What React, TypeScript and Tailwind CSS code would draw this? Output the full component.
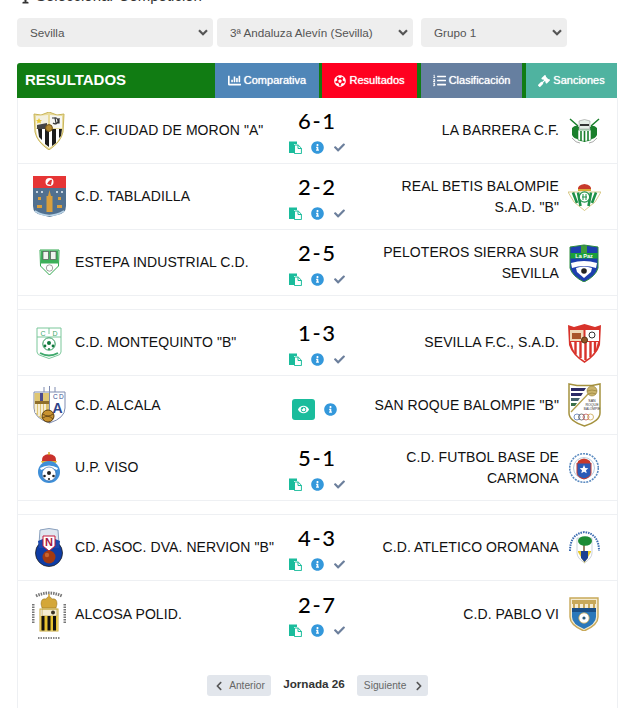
import React from "react";
import { FaChartBar, FaFutbol, FaListOl, FaGavel, FaInfoCircle, FaCheck, FaEye, FaChevronLeft, FaChevronRight, FaTrophy } from "react-icons/fa";

const Moron = () => (
  <svg width="32" height="38" viewBox="0 0 32 38">
    <path d="M1 2 L8 3 L16 0 L24 3 L31 2 L30 20 Q28 30 16 38 Q4 30 2 20Z" fill="#e9dc9c" stroke="#c9b55a" />
    <path d="M3 4 L15 3 V16 H3Z" fill="#f3f0e0" />
    <path d="M17 3 L29 4 V16 H17Z" fill="#f6f6f2" />
    <path d="M4 13 L14 11 V17 H4Z" fill="#444" />
    <path d="M6 6 l1 2 2 0 -1.5 1.5 .5 2 -2 -1 -2 1 .5 -2 L3 8h2z" fill="#e7c838" />
    <path d="M19 6 h3 l1 5 h3 v-5 M20 11 a3 3 0 1 0 1 -5" fill="none" stroke="#333" strokeWidth="1.2" />
    <path d="M3 17 H29 L28 23 Q26 30 16 36 Q6 30 4 23Z" fill="#fff" />
    <path d="M5 17h4v11l-3 -3zM12 17h4v18l-4 -3zM19 17h4v14l-4 3zM26 17h3l-1 7 -2 2z" fill="#1c1c1c" />
    <circle cx="16" cy="16" r="3.4" fill="#b58a2f" stroke="#6e5219" />
  </svg>
);
const Tabladilla = () => (
  <svg width="33" height="41" viewBox="0 0 33 41">
    <rect x="0" y="0" width="33" height="12" fill="#e63535" />
    <circle cx="16.5" cy="6" r="4" fill="#fff" />
    <path d="M14 8 q3 -5 5 -4 l-1 5z" fill="#d33" />
    <path d="M0 12 H33 V30 Q33 38 24 39 L16.5 41 L9 39 Q0 38 0 30Z" fill="#51708f" />
    <path d="M16.5 14 L18 20 H19.5 V36 H13.5 V20 H15Z" fill="#d99f3e" />
    <rect x="3" y="15" width="2" height="2" fill="#c6d2dd" /><rect x="8" y="15" width="2" height="2" fill="#c6d2dd" /><rect x="23" y="15" width="2" height="2" fill="#c6d2dd" /><rect x="28" y="15" width="2" height="2" fill="#c6d2dd" />
    <rect x="5" y="21" width="3" height="3" fill="#d99f3e" /><rect x="25" y="21" width="3" height="3" fill="#d99f3e" />
    <rect x="4" y="29" width="5" height="3" fill="#d99f3e" /><rect x="24" y="29" width="5" height="3" fill="#d99f3e" />
    <path d="M2 35 Q16 44 31 35" fill="none" stroke="#b9d3e6" strokeWidth="1.5" />
  </svg>
);
const Estepa = () => (
  <svg width="21" height="27" viewBox="0 0 21 27">
    <path d="M1 1 H20 L19.5 17 L10.5 26 L1.5 17Z" fill="#fff" stroke="#31a84f" />
    <rect x="2" y="1.5" width="17" height="13" fill="#3db05a" />
    <rect x="4" y="2.5" width="5.5" height="8" fill="#eef4ee" stroke="#555" strokeWidth=".7" />
    <rect x="11.5" y="2.5" width="5.5" height="8" fill="#eef4ee" stroke="#555" strokeWidth=".7" />
    <circle cx="10.5" cy="19" r="3.2" fill="#fff" stroke="#777" strokeWidth=".7" />
  </svg>
);
const Montequinto = () => (
  <svg width="26" height="32" viewBox="0 0 26 32">
    <path d="M1 1 H25 V25 Q25 28 20 29 L13 31.5 L6 29 Q1 28 1 25Z" fill="#fff" stroke="#7ac79a" />
    <path d="M13 1 V7 M1 10 H25" stroke="#7ac79a" />
    <text x="7" y="8.5" fontSize="7" fill="#3fa96c" textAnchor="middle" fontFamily="Liberation Sans">C</text>
    <text x="19" y="8.5" fontSize="7" fill="#3fa96c" textAnchor="middle" fontFamily="Liberation Sans">D</text>
    <circle cx="13" cy="17" r="6.2" fill="#fff" stroke="#2f9a5c" />
    <circle cx="13" cy="16" r="2" fill="#10783c" /><circle cx="9" cy="19" r="1.4" fill="#10783c" /><circle cx="17" cy="19" r="1.4" fill="#10783c" /><circle cx="13" cy="22" r="1" fill="#10783c" />
    <path d="M4 26 Q13 31 22 26" fill="none" stroke="#3fa96c" strokeWidth="1.8" />
  </svg>
);
const Alcala = () => (
  <svg width="33" height="38" viewBox="0 0 33 38">
    <path d="M1 6 H32 V22 Q32 32 16.5 37 Q1 32 1 22Z" fill="#fff" stroke="#7e8bb0" />
    <path d="M16.5 0 V37 M11 1 V6 M22 1 V6" stroke="#7e8bb0" />
    <path d="M1.5 7 H16 V36 Q2 32 1.5 22Z" fill="#dfc672" />
    <rect x="2" y="15" width="14" height="3" fill="#8f6f2a" />
    <path d="M3 18v9M6 18v12M9 18v13M12 18v12" stroke="#fff" strokeWidth="1.4" />
    <rect x="7" y="7" width="3" height="8" fill="#4a4a8e" />
    <text x="20" y="13" fontSize="6.5" fill="#3b4f90" fontFamily="Liberation Sans">C</text>
    <text x="26" y="13" fontSize="6.5" fill="#3b4f90" fontFamily="Liberation Sans">D</text>
    <text x="24.5" y="27" fontSize="14" fill="#2f4388" textAnchor="middle" fontFamily="Liberation Sans" fontWeight="700">A</text>
    <circle cx="15" cy="30" r="6" fill="#c8922f" stroke="#5a3d10" />
    <path d="M10 28 Q15 32 20 28 M10 32 Q15 28 20 33" stroke="#5a3d10" fill="none" strokeWidth=".8" />
  </svg>
);
const Viso = () => (
  <svg width="24" height="32" viewBox="0 0 24 32">
    <path d="M5 9 Q4 3 12 2 Q20 3 19 9Z" fill="#c9312c" />
    <path d="M4 9 H20 L19 11 H5Z" fill="#e4b531" />
    <path d="M12 0 V3" stroke="#d9a520" strokeWidth="1.5" />
    <circle cx="12" cy="20" r="11" fill="#3f8fd8" />
    <path d="M3 16 Q12 11 21 16 L20 18 Q12 14 4 18Z" fill="#fff" />
    <circle cx="12" cy="22" r="7" fill="#fff" stroke="#1d5ca5" strokeWidth=".6" />
    <circle cx="12" cy="21" r="2" fill="#222" /><circle cx="7.5" cy="24" r="1.3" fill="#222" /><circle cx="16.5" cy="24" r="1.3" fill="#222" /><circle cx="12" cy="27" r="1.1" fill="#222" />
  </svg>
);
const Nervion = () => (
  <svg width="28" height="40" viewBox="0 0 28 40">
    <path d="M5 2 Q14 -1 23 2 L24 16 H4Z" fill="#dfe6ef" stroke="#8aa0bd" />
    <circle cx="14" cy="25" r="13.5" fill="#0e3ca5" stroke="#222" strokeWidth=".8" />
    <path d="M3 13 Q14 7 25 13 L24 20 H4Z" fill="#1c48ad" />
    <path d="M8 8 H20 V18 L14 23 L8 18Z" fill="#fff" stroke="#c5183b" />
    <text x="14" y="18" fontSize="11" fontWeight="700" fill="#a9173f" textAnchor="middle" fontFamily="Liberation Sans">N</text>
    <circle cx="14" cy="29" r="6.5" fill="#a13a12" />
    <circle cx="12" cy="27" r="2.2" fill="#c9642e" />
  </svg>
);
const Alcosa = () => (
  <svg width="34" height="50" viewBox="0 0 34 50">
    <path d="M4 7 Q17 1 30 7" fill="none" stroke="#777" strokeWidth="3" strokeDasharray="1.5 1" />
    <path d="M1 15 V34 M33 15 V34" stroke="#777" strokeWidth="3" strokeDasharray="1.5 1" />
    <path d="M9 15 Q9 9 14 10 Q17 5 20 10 Q25 9 25 15 L24 19 H10Z" fill="#d4a738" stroke="#8f6c1b" strokeWidth=".5" />
    <path d="M17 5 V9" stroke="#d4a738" strokeWidth="1.5" />
    <rect x="10" y="20" width="15" height="7" fill="#f5eed2" stroke="#aa8a2d" strokeWidth=".6" />
    <circle cx="21" cy="23.5" r="2" fill="#3a3222" />
    <rect x="8" y="20" width="18" height="22" fill="none" stroke="#c9a837" strokeWidth="1" />
    <rect x="8.5" y="27" width="17" height="14.5" fill="#e6c22f" />
    <path d="M11 27 V41.5 M17 27 V41.5 M22.5 27 V41.5" stroke="#111" strokeWidth="3" />
    <path d="M6 49 H28" stroke="#888" strokeWidth="2" strokeDasharray="1.5 1" />
  </svg>
);
const Barrera = () => (
  <svg width="31" height="26" viewBox="0 0 31 26">
    <path d="M1 1 L9 8 M30 1 L22 8" stroke="#1a7f2c" strokeWidth="1.5" />
    <path d="M3 10 Q7 6 10 9 L9 21 Q5 21 3 17Z M28 10 Q24 6 21 9 L22 21 Q26 21 28 17Z" fill="#1a7f2c" />
    <path d="M10 3 Q15.5 0 21 3 L20.5 11 H10.5Z" fill="#e6eee7" stroke="#888" strokeWidth=".5" />
    <rect x="11" y="6" width="9" height="2" fill="#333" />
    <path d="M9 12 H22 V22 Q15.5 25 9 22Z" fill="#fff" stroke="#1a7f2c" strokeWidth=".6" />
    <path d="M12 13 V23 M15.5 13 V24 M19 13 V23" stroke="#1a7f2c" strokeWidth="1.6" />
    <path d="M3 20 Q7 25 11 25 M28 20 Q24 25 20 25" stroke="#aaa" fill="none" />
  </svg>
);
const Betis = () => (
  <svg width="33" height="28" viewBox="0 0 33 28">
    <path d="M10 7 Q9 2 16.5 1 Q24 2 23 7Z" fill="#c73a2c" />
    <rect x="10" y="6" width="13" height="2" fill="#d9ad37" />
    <path d="M0 9 H33 L27 19 L16.5 27.5 L6 19Z" fill="#fff" stroke="#c9b55a" strokeWidth=".7" />
    <path d="M5 9.5 L9 20 M10 9.5 L12.5 23 M23 9.5 L20.5 23 M28 9.5 L24 20" stroke="#1f9148" strokeWidth="2.6" />
    <circle cx="16.5" cy="14" r="5.2" fill="#fff" stroke="#1f9148" strokeWidth="1.2" />
    <path d="M15 11 V17 M18 11 V17 M14 14 H19" stroke="#1f9148" />
  </svg>
);
const Peloteros = () => (
  <svg width="30" height="38" viewBox="0 0 30 38">
    <path d="M1 3 L15 1 L29 3 V24 Q27 32 15 38 Q3 32 1 24Z" fill="#1d3fae" stroke="#2f8f3e" />
    <path d="M12 1.5 H18 V9 H28.5 V10 H1.5 V9 H12Z" fill="#3e9c3a" />
    <rect x="1.5" y="9" width="27" height="5.5" fill="#1aa03a" />
    <text x="15" y="14" fontSize="5.5" fill="#fff" textAnchor="middle" fontFamily="Liberation Sans" fontWeight="700">La Paz</text>
    <path d="M2 19 Q15 15 28 19 L27 24 Q15 20 3 24Z" fill="#fff" />
    <path d="M7 24 Q15 21 23 24 L22 28 L15 34 L8 28Z" fill="#fff" />
    <circle cx="15" cy="27" r="2.8" fill="#222" />
  </svg>
);
const Sevilla = () => (
  <svg width="33" height="40" viewBox="0 0 33 40">
    <path d="M0 2 L6 4 L16.5 1 L27 4 L33 2 L32 22 Q29 32 16.5 40 Q4 32 1 22Z" fill="#d8332b" />
    <path d="M2 7 H15.5 V18 H2Z" fill="#efd8b9" /><path d="M17.5 7 H31 V18 H17.5Z" fill="#fff" />
    <path d="M4 10 h9 v6 h-9z" fill="#a9552c" />
    <circle cx="24" cy="12" r="3" fill="none" stroke="#333" />
    <path d="M3 19 H30 L28 26 Q25 33 16.5 38 Q8 33 5 26Z" fill="#fff" />
    <path d="M7.5 19 V31 M12.5 19 V35 M17.5 19 V37 M22.5 19 V34 M27 19 V29" stroke="#d8332b" strokeWidth="2.4" />
    <circle cx="16.5" cy="17" r="3" fill="#8f5526" stroke="#5a3414" />
  </svg>
);
const SanRoque = () => (
  <svg width="33" height="44" viewBox="0 0 33 44">
    <path d="M1 1 L9 2.5 L24 2.5 L32 1 V30 Q32 38 16.5 43 Q1 38 1 30Z" fill="#fff" stroke="#a5923f" strokeWidth="1.5" />
    <path d="M3 5 H18 L16 8 H3Z" fill="#2b2a66" /><path d="M3 10 H15 L13 13 H3Z" fill="#2b2a66" /><path d="M3 15 H12 L10 18 H3Z" fill="#44606b" /><path d="M3 20 H9 L7 23 H3Z" fill="#3c7048" />
    <path d="M3 29 L20 11" stroke="#b5a04c" strokeWidth="1.3" />
    <circle cx="24" cy="8" r="5" fill="#c9b36b" stroke="#8f7b35" strokeWidth=".6" />
    <path d="M19 8 Q24 6 29 8 M20 11 Q24 9 28 11" stroke="#8f7b35" fill="none" strokeWidth=".6" />
    <text x="24" y="19" fontSize="3.6" fill="#333" textAnchor="middle" fontFamily="Liberation Sans">SAN</text>
    <text x="24" y="23" fontSize="3.6" fill="#333" textAnchor="middle" fontFamily="Liberation Sans">ROQUE</text>
    <text x="24" y="27" fontSize="3.2" fill="#333" textAnchor="middle" fontFamily="Liberation Sans">BALOMPIE</text>
    <circle cx="9" cy="34" r="3" fill="none" stroke="#5a79b5" strokeWidth=".8" /><circle cx="13.5" cy="34" r="3" fill="none" stroke="#555" strokeWidth=".8" /><circle cx="18" cy="34" r="3" fill="none" stroke="#c75a5a" strokeWidth=".8" /><circle cx="22.5" cy="34" r="3" fill="none" stroke="#c9a64c" strokeWidth=".8" />
  </svg>
);
const Carmona = () => (
  <svg width="30" height="32" viewBox="0 0 30 32">
    <circle cx="15" cy="16" r="14.3" fill="#fff" stroke="#5a8ac0" strokeWidth="1.6" strokeDasharray="2 1" />
    <circle cx="15" cy="16" r="10.5" fill="#fff" stroke="#87a9c9" strokeWidth=".6" />
    <path d="M9 9 Q15 4 21 9 V11 H9Z" fill="#c73a2c" />
    <path d="M8 11 H22 V21 Q22 25 15 27 Q8 25 8 21Z" fill="#2b5cb8" stroke="#c73a2c" />
    <path d="M15 13 l1.3 3 3 .3 -2.3 2 .7 3 -2.7 -1.6 -2.7 1.6 .7 -3 -2.3 -2 3 -.3z" fill="#fff" />
  </svg>
);
const Oromana = () => (
  <svg width="33" height="33" viewBox="0 0 33 33">
    <path d="M2 20 Q2 3 16.5 1 Q31 3 31 20" fill="none" stroke="#3a6ab0" strokeWidth="2" strokeDasharray="1.5 1" />
    <path d="M9 7 H24 V22 Q24 27 16.5 32 Q9 27 9 22Z" fill="#fff" stroke="#9aa7b8" strokeWidth=".5" />
    <path d="M10 21 L16.5 32 L23 21 V20 H10Z" fill="#e6c82a" />
    <path d="M13 20 H20 V27 L16.5 31 L13 27Z" fill="#1d3f91" />
    <path d="M16 20 V12" stroke="#7a5a33" strokeWidth="1.5" />
    <ellipse cx="17" cy="10" rx="7" ry="4.8" fill="#1d8b36" />
  </svg>
);
const PabloVI = () => (
  <svg width="30" height="34" viewBox="0 0 30 34">
    <path d="M1 1 H29 V20 Q29 28 15 34 Q1 28 1 20Z" fill="#f4ecd4" stroke="#c8a95a" strokeWidth="1.4" />
    <path d="M3 3 H27 V7 H3Z" fill="#c8a95a" />
    <path d="M5 7v4M10 7v4M15 7v4M20 7v4M25 7v4" stroke="#c8a95a" strokeWidth="2" />
    <rect x="3" y="11" width="24" height="4" fill="#1a4f87" />
    <path d="M3 15 H27 V20 Q27 27 15 32 Q3 27 3 20Z" fill="#2b78ba" />
    <circle cx="15" cy="21" r="5.2" fill="#fff" stroke="#c8a95a" strokeWidth=".8" />
    <circle cx="15" cy="21" r="1.6" fill="#2b5c7a" />
  </svg>
);

const Paste = () => (
  <svg width="13" height="13" viewBox="0 0 13 13">
    <path d="M0 0.5 H8 V3 H5 V12 H0Z" fill="#1abc9c" />
    <path d="M5.5 4 H9.2 L12.4 7.2 V12.6 H5.5Z" fill="#fff" stroke="#1abc9c" />
    <path d="M9 4 V7.5 H12.4" fill="none" stroke="#1abc9c" />
  </svg>
);

const Chevron = () => (
  <svg width="10" height="7" viewBox="0 0 10 7" className="absolute right-[5px] top-[11px] pointer-events-none">
    <path d="M1 1.2 L5 5.2 L9 1.2" fill="none" stroke="#555" strokeWidth="2.2" />
  </svg>
);

type Match = { home: string; away: string; score?: string; h: React.ReactNode; a: React.ReactNode };

const groups: Match[][] = [
  [
    { home: 'C.F. CIUDAD DE MORON "A"', away: "LA BARRERA C.F.", score: "6 - 1", h: <Moron />, a: <Barrera /> },
    { home: "C.D. TABLADILLA", away: 'REAL BETIS BALOMPIE S.A.D. "B"', score: "2 - 2", h: <Tabladilla />, a: <Betis /> },
    { home: "ESTEPA INDUSTRIAL C.D.", away: "PELOTEROS SIERRA SUR SEVILLA", score: "2 - 5", h: <Estepa />, a: <Peloteros /> },
  ],
  [
    { home: 'C.D. MONTEQUINTO "B"', away: "SEVILLA F.C., S.A.D.", score: "1 - 3", h: <Montequinto />, a: <Sevilla /> },
    { home: "C.D. ALCALA", away: 'SAN ROQUE BALOMPIE "B"', h: <Alcala />, a: <SanRoque /> },
    { home: "U.P. VISO", away: "C.D. FUTBOL BASE DE CARMONA", score: "5 - 1", h: <Viso />, a: <Carmona /> },
  ],
  [
    { home: 'CD. ASOC. DVA. NERVION "B"', away: "C.D. ATLETICO OROMANA", score: "4 - 3", h: <Nervion />, a: <Oromana /> },
    { home: "ALCOSA POLID.", away: "C.D. PABLO VI", score: "2 - 7", h: <Alcosa />, a: <PabloVI /> },
  ],
];

function Row({ m, last }: { m: Match; last: boolean }) {
  return (
    <div className={`grid grid-cols-[263px_72px_1fr] items-center ${m.score ? "h-[66px]" : "h-[59px]"} ${last ? "" : "border-b border-[#eef0f3]"}`}>
      <div className="flex items-center">
        <div className="flex justify-center w-[36px] ml-[13px] mr-[8px] shrink-0">{m.h}</div>
        <span className="text-[14px] leading-[21px] text-[#111] tracking-[0.08px]">{m.home}</span>
      </div>
      {m.score ? (
        <div className="flex flex-col items-center pt-[2px] pr-[1px]">
          <span className="font-['Lato',sans-serif] font-medium text-[22px] leading-[24px] text-black [word-spacing:-4px]">{m.score}</span>
          <div className="flex items-center justify-center gap-[9px] mt-[7px] h-[14px]">
            <Paste />
            <FaInfoCircle className="text-[#3498db] text-[13px]" />
            <FaCheck className="text-[#6c7f9c] text-[11px] ml-[1px]" />
          </div>
        </div>
      ) : (
        <div className="flex items-center justify-center gap-[9px] mt-[8px] mr-[6px]">
          <span className="flex items-center justify-center w-[23px] h-[21px] rounded-[3px] bg-[#1abc9c]">
            <FaEye className="text-white text-[11px]" />
          </span>
          <FaInfoCircle className="text-[#3498db] text-[13px]" />
        </div>
      )}
      <div className="flex items-center justify-end pl-[7px]">
        <span className="text-[14px] leading-[21px] text-[#111] text-right tracking-[0.08px]">{m.away}</span>
        <div className="flex justify-center w-[36px] ml-[7px] mr-[15px] shrink-0">{m.a}</div>
      </div>
    </div>
  );
}

const tabBase = "flex items-center justify-center gap-[3px] text-white text-[11px] h-full [text-shadow:0_0_1px_#fff]";
const selectBase = "appearance-none h-[29px] w-full pl-[13px] bg-[#eeeeee] rounded-[4px] text-[11.7px] text-[#555] outline-none";

export default function App() {
  return (
    <div className="w-[624px] h-[708px] overflow-hidden bg-white font-['Liberation_Sans',Arial,sans-serif]">
      <div className="h-[4px] overflow-hidden flex items-end pl-[20px] text-[#333]">
        <FaTrophy className="text-[11px] mr-[5px] shrink-0" />
        <span className="leading-[16px] whitespace-nowrap text-[15px]">Seleccionar Competición</span>
      </div>
      <div className="flex pl-[17px] pt-[14px]">
        <div className="relative w-[196px] mr-[4px]">
          <select defaultValue="Sevilla" className={selectBase}>
            <option>Sevilla</option>
          </select>
          <Chevron />
        </div>
        <div className="relative w-[196px] mr-[8px]">
          <select defaultValue="3ª Andaluza Alevín (Sevilla)" className={selectBase}>
            <option>3ª Andaluza Alevín (Sevilla)</option>
          </select>
          <Chevron />
        </div>
        <div className="relative w-[146px]">
          <select defaultValue="Grupo 1" className={selectBase}>
            <option>Grupo 1</option>
          </select>
          <Chevron />
        </div>
      </div>
      <div className="ml-[17px] mt-[16px] w-[601px]">
        <div className="flex w-[600px] h-[35px] bg-[#117c13] rounded-tl-[3px]">
          <div className="w-[198px] pl-[8px] flex items-center text-white font-bold text-[15px] pb-[1px]">RESULTADOS</div>
          <div className={`${tabBase} w-[104px] bg-[#4f86b8]`}><FaChartBar className="text-[13px]" />Comparativa</div>
          <div className={`${tabBase} w-[95px] ml-[3px] bg-[#ff0020]`}><FaFutbol className="text-[12px]" />Resultados</div>
          <div className={`${tabBase} w-[101px] ml-[4px] bg-[#667fa0]`}><FaListOl className="text-[13px]" />Clasificación</div>
          <div className={`${tabBase} w-[91px] ml-[4px] bg-[#4fb3a0]`}><FaGavel className="text-[12px]" />Sanciones</div>
        </div>
        <div className="border-x border-[#eef0f3] h-[640px]">
          {groups.map((g, gi) => (
            <div key={gi}>
              {g.map((m, i) => (
                <Row key={i} m={m} last={gi === groups.length - 1 && i === g.length - 1} />
              ))}
              {gi < groups.length - 1 && <div className="h-[14px] border-b border-[#eef0f3]" />}
            </div>
          ))}
          <div className="flex items-start justify-center pt-[28px]">
            <button className="flex items-center w-[64px] h-[21px] bg-[#e2e6ec] rounded-[3px] pl-[7px] text-[#666] text-[10.2px]">
              <FaChevronLeft className="text-[#555] text-[10px] mr-[5px]" />Anterior
            </button>
            <span className="mx-[12px] text-[11.7px] font-bold text-[#333] leading-[17px]">Jornada 26</span>
            <button className="flex items-center w-[71px] h-[21px] bg-[#e2e6ec] rounded-[3px] pl-[7px] text-[#666] text-[10.2px]">
              Siguiente<FaChevronRight className="text-[#555] text-[10px] ml-[8px]" />
            </button>
          </div>
        </div>
      </div>
    </div>
  );
}
